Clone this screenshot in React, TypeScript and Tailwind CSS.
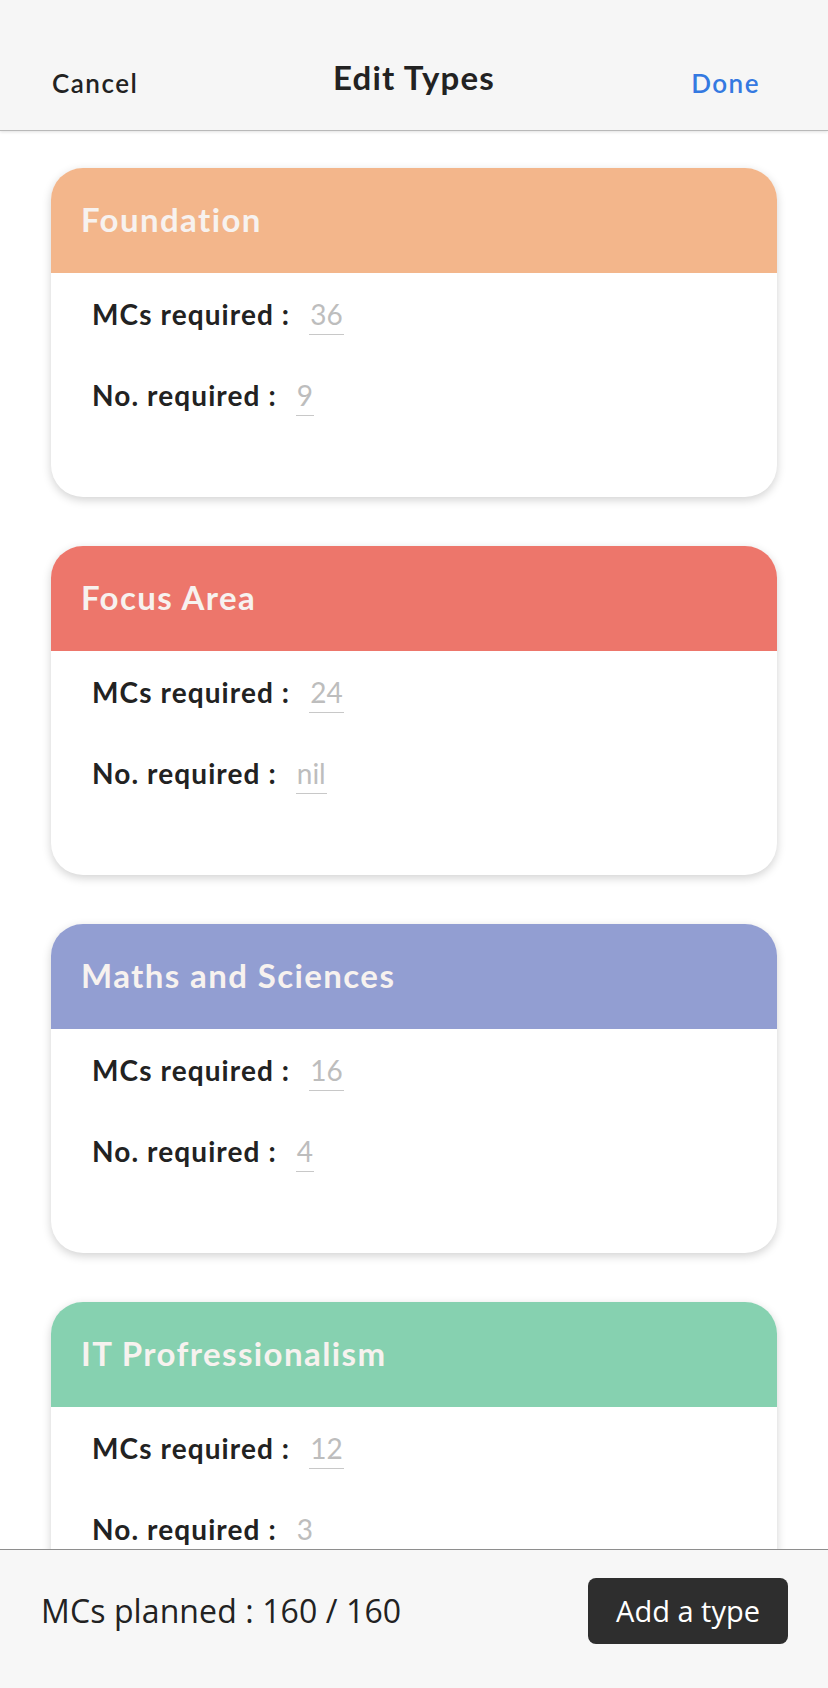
import React from "react";

type TypeCard = {
  title: string;
  color: string;
  mcs: string;
  count: string;
};

const types: TypeCard[] = [
  { title: "Foundation", color: "bg-[#f3b68b]", mcs: "36", count: "9" },
  { title: "Focus Area", color: "bg-[#ed766b]", mcs: "24", count: "nil" },
  { title: "Maths and Sciences", color: "bg-[#929ed2]", mcs: "16", count: "4" },
  { title: "IT Profressionalism", color: "bg-[#86d1b0]", mcs: "12", count: "3" },
];

const rounded = { fontFamily: "Lato, 'Open Sans', sans-serif" };
const plain = { fontFamily: "'Open Sans', 'Noto Sans', sans-serif" };

const Field = ({ label, value }: { label: string; value: string }) => {
  return (
    <div className="flex items-baseline h-[81px]">
      <span className="text-[28px] font-bold tracking-[1.1px] text-[#222]">{label}</span>
      <span className="ml-[19px] border-b border-[#c8c8c8] px-[1px] text-[28px] font-normal leading-[40px] text-[#bdbdbd]">
        {value}
      </span>
    </div>
  );
};

const Card = ({ item }: { item: TypeCard }) => {
  return (
    <div className="shrink-0 h-[329px] rounded-[32px] bg-white shadow-[0_3px_10px_rgba(0,0,0,0.18)] overflow-hidden">
      <div className={`${item.color} h-[105px] flex items-center px-[30px]`}>
        <h2 className="text-[33px] font-bold tracking-[1.4px] text-[#f7f2ef] pb-[2px]">{item.title}</h2>
      </div>
      <div className="px-[41px] pt-[20px]">
        <Field label="MCs required :" value={item.mcs} />
        <Field label="No. required :" value={item.count} />
      </div>
    </div>
  );
};

export default function App() {
  return (
    <div className="w-[828px] h-[1688px] flex flex-col bg-white overflow-hidden" style={rounded}>
      {/* top bar */}
      <div className="h-[131px] shrink-0 bg-[#f6f6f6] border-b border-[#b9b9b9] shadow-[0_1px_3px_rgba(0,0,0,0.12)] flex items-end pb-[27px] px-[52px] relative z-10">
        <span className="text-[26px] font-semibold tracking-[1.5px] text-[#222] w-[150px]">Cancel</span>
        <h1 className="flex-1 text-center text-[33px] font-bold tracking-[1.2px] text-[#222] -translate-y-[1px]">Edit Types</h1>
        <span className="text-[26px] font-semibold tracking-[1.5px] text-[#3479e1] w-[150px] text-right pr-[16px]">Done</span>
      </div>

      {/* list */}
      <div className="flex-1 overflow-hidden px-[51px] pt-[37px] flex flex-col gap-[49px]">
        {types.map((t) => (
          <Card key={t.title} item={t} />
        ))}
      </div>

      {/* bottom bar */}
      <div
        className="h-[139px] shrink-0 bg-[#f7f7f7] border-t border-[#8e8e8e] flex items-center justify-between pl-[41px] pr-[40px] pb-[16px]"
        style={plain}
      >
        <span className="text-[32px] font-medium tracking-[0.1px] text-[#222]">MCs planned : 160 / 160</span>
        <button className="h-[66px] w-[200px] rounded-[8px] bg-[#2e2e2e] text-white text-[29px]">
          Add a type
        </button>
      </div>
    </div>
  );
}
